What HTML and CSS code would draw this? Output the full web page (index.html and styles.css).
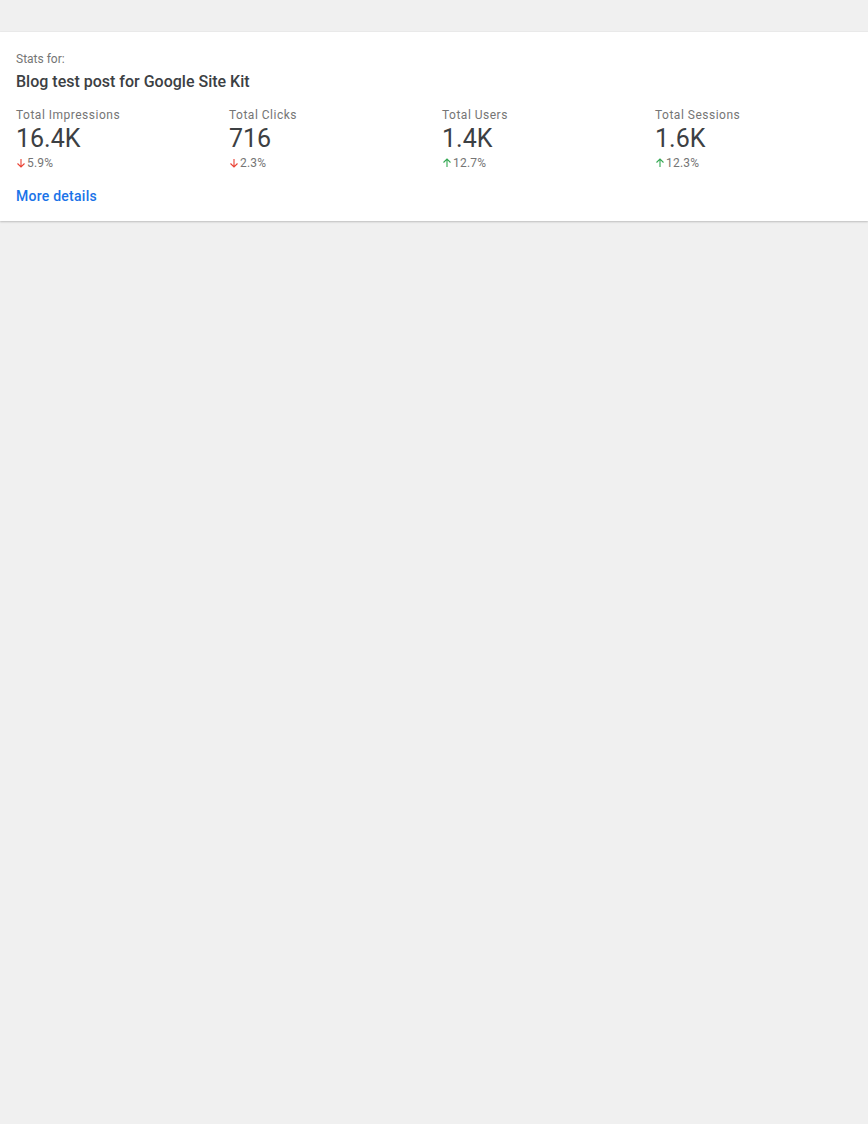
FILE: index.html
```html
<!DOCTYPE html>
<html>
<head>
<meta charset="utf-8">
<link rel="stylesheet" href="styles.css">
</head>
<body>
<div class="card">
  <div class="eyebrow">Stats for:</div>
  <div class="title">Blog test post for Google Site Kit</div>
  <div class="stats">
    <div class="stat">
      <div class="label">Total Impressions</div>
      <div class="value">16.4K</div>
      <div class="change down"><svg viewBox="0 0 10 10" class="arrow"><path d="M5 1v8M1.5 5.5L5 9l3.5-3.5" fill="none" stroke="currentColor" stroke-width="1.1"/></svg><span>5.9%</span></div>
    </div>
    <div class="stat">
      <div class="label">Total Clicks</div>
      <div class="value">716</div>
      <div class="change down"><svg viewBox="0 0 10 10" class="arrow"><path d="M5 1v8M1.5 5.5L5 9l3.5-3.5" fill="none" stroke="currentColor" stroke-width="1.1"/></svg><span>2.3%</span></div>
    </div>
    <div class="stat">
      <div class="label">Total Users</div>
      <div class="value">1.4K</div>
      <div class="change up"><svg viewBox="0 0 10 10" class="arrow"><path d="M5 9V1M1.5 4.5L5 1l3.5 3.5" fill="none" stroke="currentColor" stroke-width="1.1"/></svg><span>12.7%</span></div>
    </div>
    <div class="stat">
      <div class="label">Total Sessions</div>
      <div class="value">1.6K</div>
      <div class="change up"><svg viewBox="0 0 10 10" class="arrow"><path d="M5 9V1M1.5 4.5L5 1l3.5 3.5" fill="none" stroke="currentColor" stroke-width="1.1"/></svg><span>12.3%</span></div>
    </div>
  </div>
  <a class="more" href="#">More details</a>
</div>
</body>
</html>
```

FILE: styles.css
```css
html, body {
  margin: 0;
  padding: 0;
  background: #f0f0f0;
  font-family: Roboto, "Liberation Sans", sans-serif;
}
body {
  padding-top: 32px;
  height: 1124px;
  box-sizing: border-box;
}
.card {
  background: #fff;
  padding: 16px 0 15px 16px;
  box-shadow: 0 1px 2px rgba(0,0,0,0.2), 0 0 1px rgba(0,0,0,0.1);
}
.eyebrow {
  font-size: 12px;
  line-height: 22px;
  color: #757575;
}
.title {
  font-size: 16px;
  line-height: 24px;
  color: #3c4043;
  font-weight: 500;
  margin-bottom: 11px;
}
.stats {
  display: grid;
  grid-template-columns: repeat(4, 1fr);
}
.label {
  font-size: 12px;
  line-height: 20px;
  letter-spacing: 0.5px;
  color: #757575;
}
.value {
  font-size: 25px;
  line-height: 28px;
  color: #3c4043;
}
.change {
  display: flex;
  align-items: center;
  margin-top: 2px;
  font-size: 12px;
  line-height: 16px;
  color: #757575;
  letter-spacing: 0.2px;
}
.arrow {
  width: 10px;
  height: 10px;
  margin-right: 1px;
}
.down .arrow { color: #ea4335; }
.up .arrow { color: #34a853; }
.more {
  display: inline-block;
  margin-top: 15px;
  font-size: 14px;
  line-height: 20px;
  font-weight: 500;
  letter-spacing: 0.25px;
  color: #1a73e8;
  text-decoration: none;
}
```
